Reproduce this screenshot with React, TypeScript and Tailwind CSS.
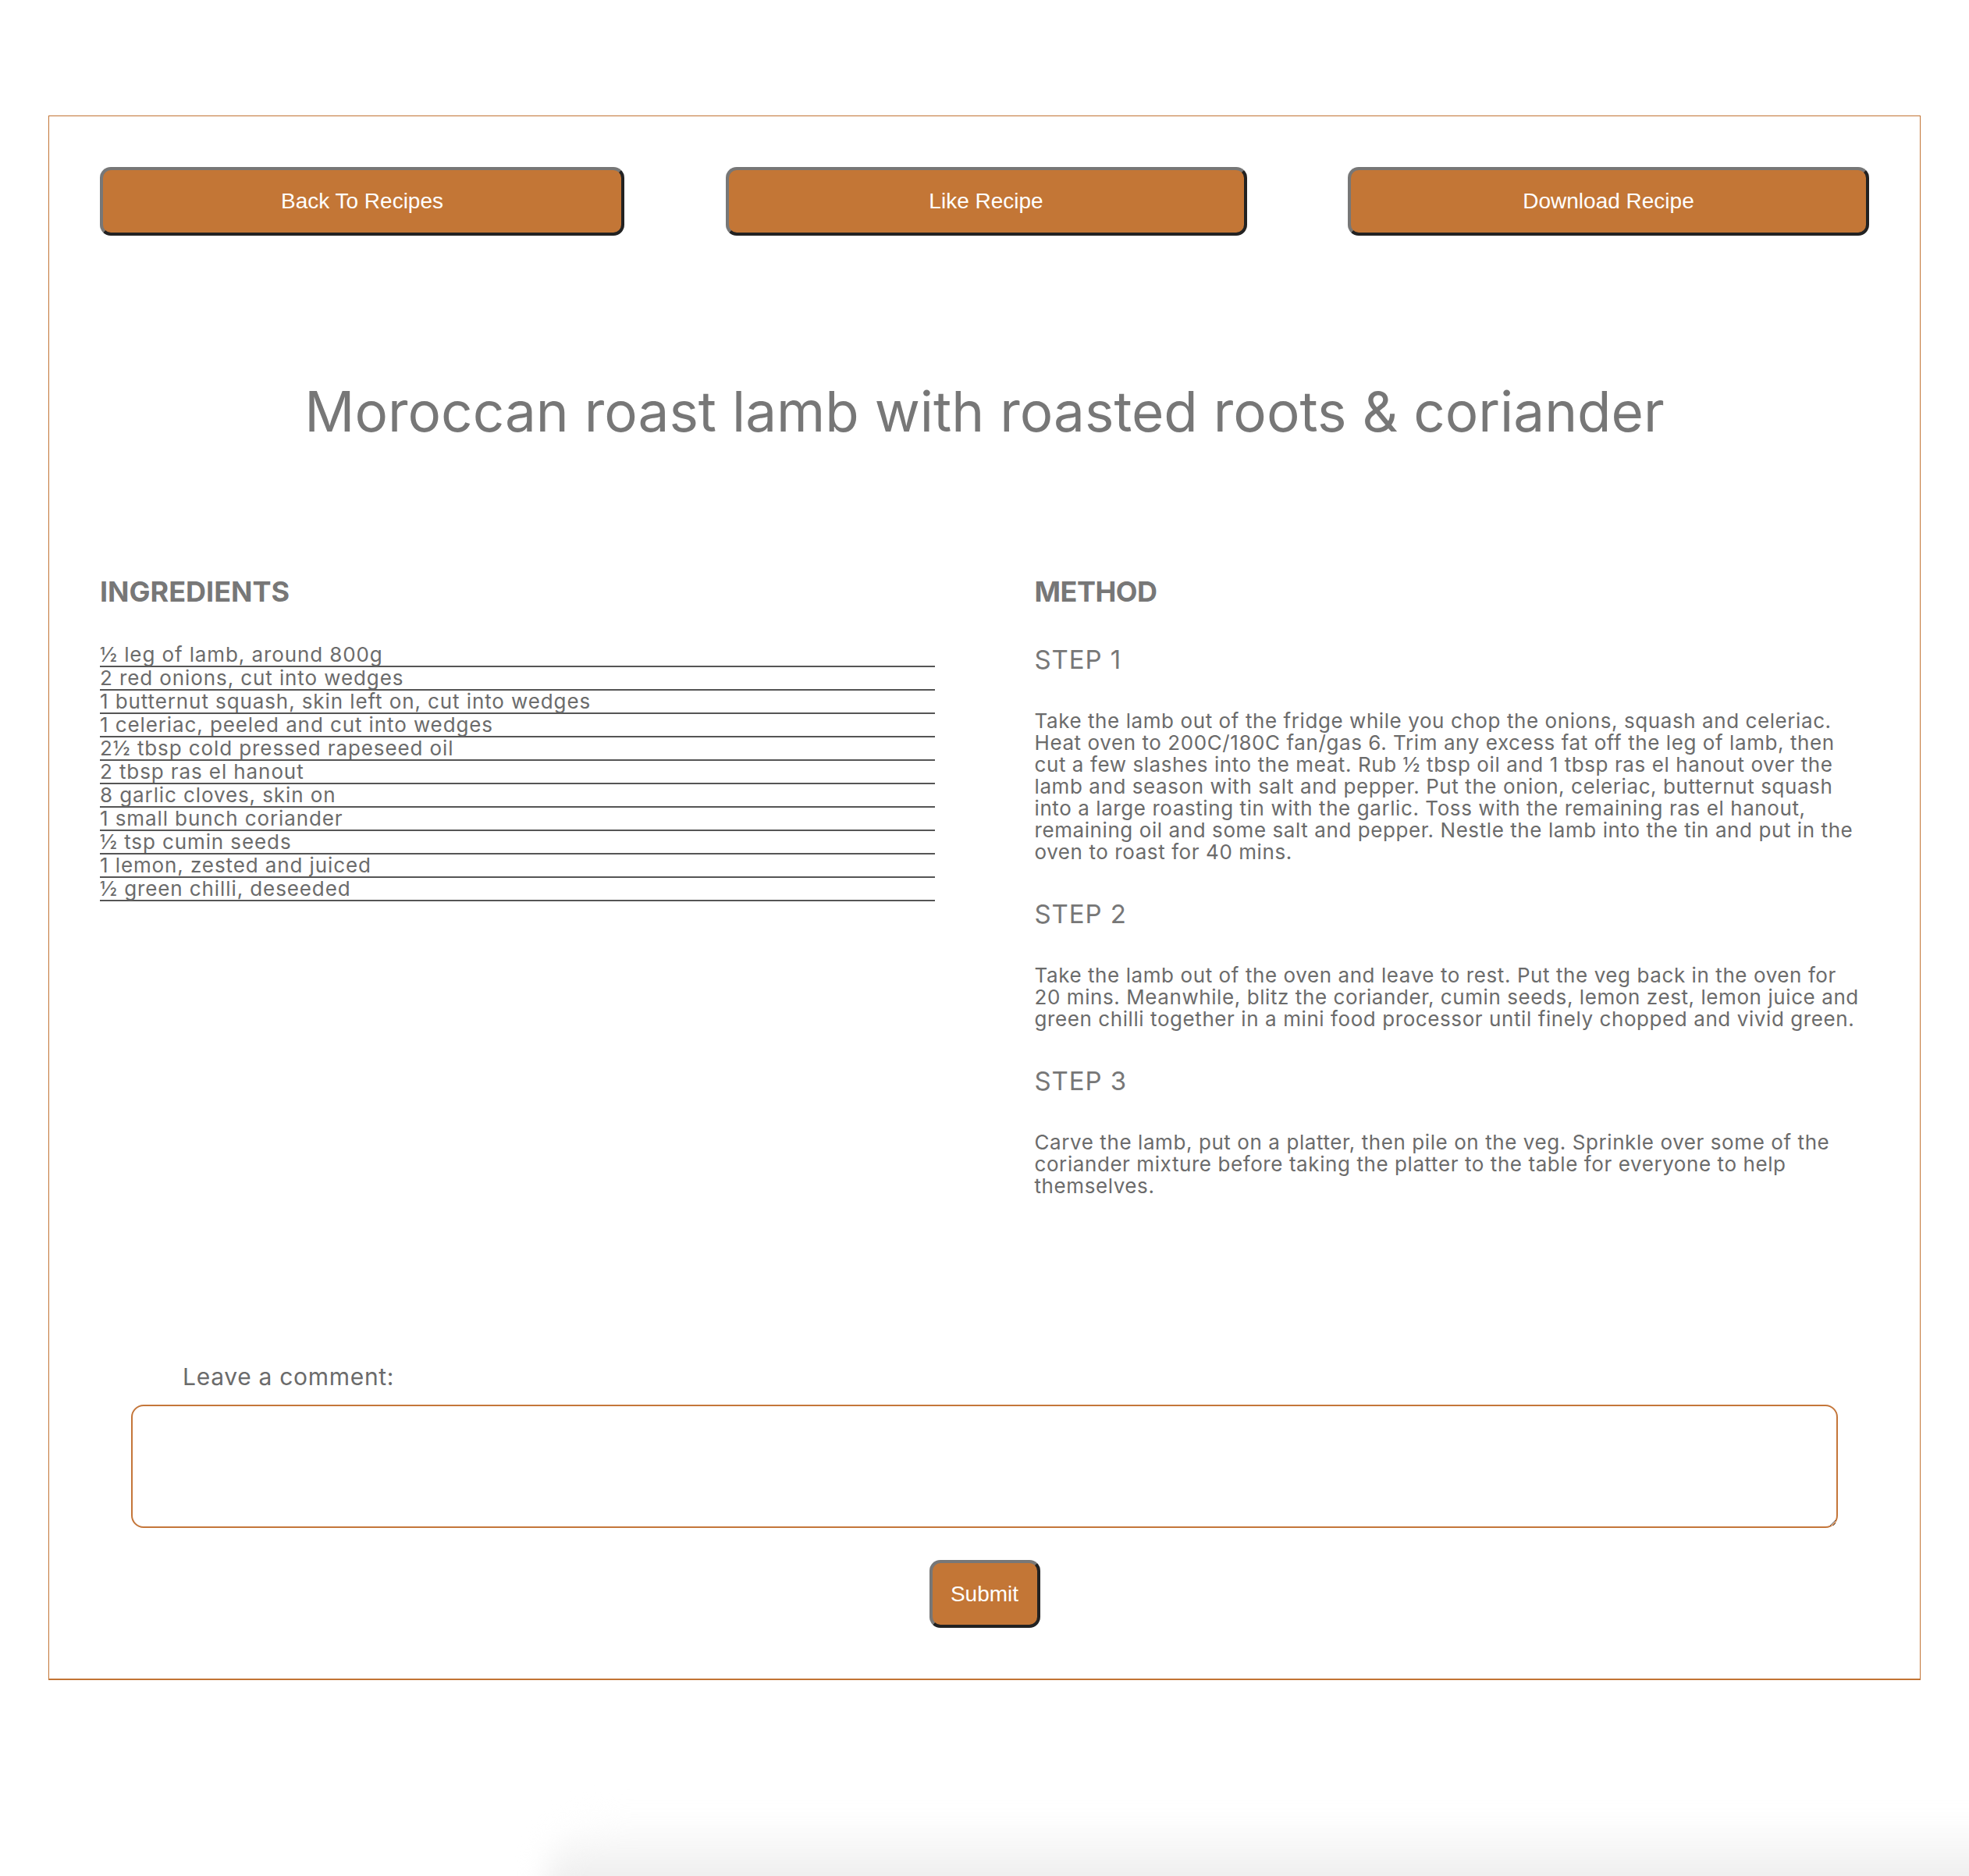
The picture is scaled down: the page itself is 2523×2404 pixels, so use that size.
import React from "react";

const ingredients = [
  "½ leg of lamb, around 800g",
  "2 red onions, cut into wedges",
  "1 butternut squash, skin left on, cut into wedges",
  "1 celeriac, peeled and cut into wedges",
  "2½ tbsp cold pressed rapeseed oil",
  "2 tbsp ras el hanout",
  "8 garlic cloves, skin on",
  "1 small bunch coriander",
  "½ tsp cumin seeds",
  "1 lemon, zested and juiced",
  "½ green chilli, deseeded",
];

const steps: string[][] = [
  [
    "Take the lamb out of the fridge while you chop the onions, squash and celeriac.",
    "Heat oven to 200C/180C fan/gas 6. Trim any excess fat off the leg of lamb, then",
    "cut a few slashes into the meat. Rub ½ tbsp oil and 1 tbsp ras el hanout over the",
    "lamb and season with salt and pepper. Put the onion, celeriac, butternut squash",
    "into a large roasting tin with the garlic. Toss with the remaining ras el hanout,",
    "remaining oil and some salt and pepper. Nestle the lamb into the tin and put in the",
    "oven to roast for 40 mins.",
  ],
  [
    "Take the lamb out of the oven and leave to rest. Put the veg back in the oven for",
    "20 mins. Meanwhile, blitz the coriander, cumin seeds, lemon zest, lemon juice and",
    "green chilli together in a mini food processor until finely chopped and vivid green.",
  ],
  [
    "Carve the lamb, put on a platter, then pile on the veg. Sprinkle over some of the",
    "coriander mixture before taking the platter to the table for everyone to help",
    "themselves.",
  ],
];

function ActionButton({ label, className }: { label: string; className: string }) {
  return (
    <button
      type="button"
      className={
        "flex items-center justify-center rounded-[14px] border-4 border-t-[#777777] border-l-[#777777] border-b-[#222222] border-r-[#222222] bg-[#c37636] text-white text-[28px] font-['Liberation_Sans',Arial,sans-serif] " +
        className
      }
    >
      {label}
    </button>
  );
}

export default function App() {
  return (
    <div className="relative min-h-[2404px] overflow-hidden bg-white pt-[148px] font-['Inter',sans-serif]">
      <div className="mx-auto w-[2399px] border border-b-2 border-[#c27434] p-[65px]">
        <div className="flex justify-between">
          <ActionButton label="Back To Recipes" className="h-[88px] w-[672px]" />
          <ActionButton label="Like Recipe" className="h-[88px] w-[668px]" />
          <ActionButton label="Download Recipe" className="h-[88px] w-[668px]" />
        </div>

        <h1 className="mt-[183px] text-center text-[71px] leading-[85px] text-[#777777]">
          Moroccan roast lamb with roasted roots &amp; coriander
        </h1>

        <div className="mt-[167px] grid grid-cols-2 gap-[128px]">
          <div>
            <h2 className="text-[36px] font-bold leading-[43px] text-[#777777]">INGREDIENTS</h2>
            <ul className="mt-[45px]">
              {ingredients.map((item) => (
                <li
                  key={item}
                  className="border-b-2 border-[#555555] text-[26px] leading-[28px] tracking-[0.9px] text-[#6b6b6b] whitespace-nowrap"
                >
                  {item}
                </li>
              ))}
            </ul>
          </div>
          <div>
            <h2 className="text-[36px] font-bold leading-[43px] tracking-[-0.5px] text-[#777777]">METHOD</h2>
            {steps.map((lines, i) => (
              <div key={i} className="mt-[46px]">
                <h3 className="text-[33px] leading-[38px] tracking-[0.9px] text-[#777777]">STEP {i + 1}</h3>
                <p className="mt-[46px] text-[26px] leading-[28px] tracking-[0.58px] text-[#6b6b6b]">
                  {lines.map((line, j) => (
                    <span key={j} className="block whitespace-nowrap">
                      {line}
                    </span>
                  ))}
                </p>
              </div>
            ))}
          </div>
        </div>

        <div className="mt-[212px]">
          <label className="block pl-[106px] text-[30px] leading-[36px] tracking-[0.7px] text-[#6b6b6b]">
            Leave a comment:
          </label>
          <textarea className="mx-auto mt-[18px] block h-[158px] w-[2187px] rounded-[16px] border-2 border-[#c4763a] bg-white outline-none" />
          <div className="mt-[41px] flex justify-center">
            <ActionButton label="Submit" className="h-[87px] w-[142px]" />
          </div>
        </div>
      </div>

      <div className="pointer-events-none absolute left-[700px] right-[-60px] top-[2330px] h-[140px] rounded-tl-[80px] bg-linear-to-b from-white to-[#e2e2e2] blur-[18px]" />
    </div>
  );
}
